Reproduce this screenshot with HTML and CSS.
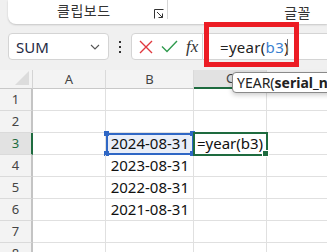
FILE: index.html
```html
<!DOCTYPE html>
<html lang="ko">
<head>
    <meta charset="UTF-8">
    <title>YEAR</title>
    <link rel="stylesheet" href="styles.css">
</head>
<body>
    <div class="ribbon">
        <div class="group clip">
            <span class="group-label">클립보드</span>
            <span class="launcher">
                <svg width="10" height="10" viewBox="0 0 10 10"><path d="M0.5 9.5V0.5h9M3 3l5.5 5.5M4.5 8.5h4v-4" fill="none" stroke="#333" stroke-width="1"/></svg>
            </span>
        </div>
        <div class="group font">
            <span class="group-label">글꼴</span>
        </div>
    </div>

    <div class="formula-row">
        <div class="namebox">
            <span>SUM</span>
            <svg width="10" height="6" viewBox="0 0 10 6"><path d="M1 1l4 4 4-4" fill="none" stroke="#555" stroke-width="1.1"/></svg>
        </div>
        <div class="dots"><i></i><i></i><i></i></div>
        <div class="fbuttons">
            <svg width="14" height="14" viewBox="0 0 14 14"><path d="M1 1l12 12M13 1L1 13" stroke="#e0383e" stroke-width="1.4"/></svg>
            <svg width="17" height="13" viewBox="0 0 17 13"><path d="M1 6.5l5 5L16 1" fill="none" stroke="#2f9a4e" stroke-width="1.4"/></svg>
            <span class="fx">fx</span>
        </div>
        <div class="finput">=year(<span class="ref">b3</span>)<span class="caret"></span></div>
        <div class="highlight"></div>
    </div>

    <div class="sheet">
        <div class="colheads">
            <div class="corner"></div>
            <div class="ch">A</div>
            <div class="ch">B</div>
            <div class="ch active">C</div>
            <div class="ch last"></div>
        </div>
        <div class="row"><div class="rh">1</div><div class="c"></div><div class="c b"></div><div class="c"></div><div class="c last"></div></div>
        <div class="row"><div class="rh">2</div><div class="c"></div><div class="c b"></div><div class="c"></div><div class="c last"></div></div>
        <div class="row sel"><div class="rh active">3</div><div class="c"></div><div class="c b src">2024-08-31<i class="h tl"></i><i class="h tr"></i><i class="h bl"></i><i class="h br"></i></div><div class="c edit">=year(b3)<i class="fill"></i></div><div class="c last"></div></div>
        <div class="row"><div class="rh">4</div><div class="c"></div><div class="c b">2023-08-31</div><div class="c"></div><div class="c last"></div></div>
        <div class="row"><div class="rh">5</div><div class="c"></div><div class="c b">2022-08-31</div><div class="c"></div><div class="c last"></div></div>
        <div class="row"><div class="rh">6</div><div class="c"></div><div class="c b">2021-08-31</div><div class="c"></div><div class="c last"></div></div>
        <div class="row"><div class="rh">7</div><div class="c"></div><div class="c b"></div><div class="c"></div><div class="c last"></div></div>
        <div class="row"><div class="rh">8</div><div class="c"></div><div class="c b"></div><div class="c"></div><div class="c last"></div></div>
        <div class="tip">YEAR(<b>serial_number</b>)</div>
    </div>
</body>
</html>
```

FILE: styles.css
```css
body {
    margin: 0;
    width: 327px;
    height: 252px;
    overflow: hidden;
    background: #f0f0f0;
    font-family: "Noto Sans", "Noto Sans CJK KR", sans-serif;
    color: #222;
}
.ribbon {
    height: 24px;
    margin-left: 8px;
    background: #fff;
    border-bottom-left-radius: 8px;
    box-shadow: 0 1px 2px rgba(0,0,0,0.18);
    display: flex;
}
.group {
    display: flex;
    align-items: center;
    height: 24px;
    position: relative;
}
.clip {
    width: 159px;
    border-right: 1px solid #d6d6d6;
    height: 19px;
}
.group-label {
    font-family: "Noto Sans CJK KR", sans-serif;
    font-size: 14px;
    color: #333;
    line-height: 24px;
    letter-spacing: 0.5px;
}
.clip .group-label {
    margin-left: 49px;
}
.launcher {
    margin-left: auto;
    margin-right: 3px;
    margin-top: 8px;
    display: flex;
}
.font {
    margin-left: auto;
    margin-right: 16px;
}
.formula-row {
    display: flex;
    align-items: center;
    height: 27px;
    margin-top: 9px;
    padding-left: 8px;
    position: relative;
}
.namebox {
    width: 101px;
    height: 27px;
    box-sizing: border-box;
    background: #fff;
    border: 1px solid #d4d4d4;
    border-radius: 4px;
    display: flex;
    align-items: center;
    justify-content: space-between;
    padding: 0 8px 0 7px;
    font-size: 15px;
    color: #1f2a44;
}
.dots {
    width: 22px;
    display: flex;
    flex-direction: column;
    align-items: center;
    gap: 3px;
}
.dots i {
    width: 2px;
    height: 2px;
    background: #333;
}
.fbuttons {
    width: 72px;
    height: 27px;
    box-sizing: border-box;
    background: #fff;
    border: 1px solid #d4d4d4;
    border-radius: 4px 0 0 4px;
    display: flex;
    align-items: center;
    gap: 8px;
    padding-left: 7px;
}
.fx {
    font-family: "Liberation Serif", serif;
    font-style: italic;
    font-size: 17px;
    color: #333;
}
.finput {
    flex: 1;
    height: 27px;
    box-sizing: border-box;
    background: #fff;
    border: 1px solid #d4d4d4;
    border-left: none;
    border-right: none;
    display: flex;
    align-items: center;
    padding-left: 17px;
    font-size: 15px;
    letter-spacing: 0.3px;
    color: #222;
}
.ref {
    color: #3b7fd0;
}
.caret {
    width: 1px;
    height: 16px;
    background: #777;
    margin-left: -2px;
}
.highlight {
    position: absolute;
    left: 204px;
    top: -11px;
    width: 95px;
    height: 45px;
    box-sizing: border-box;
    border: 5px solid #ec1c24;
}
.sheet {
    margin-top: 10px;
    background: #fff;
    position: relative;
}
.colheads, .row {
    display: grid;
    grid-template-columns: 33px 73px 88px 73px 1fr;
}
.colheads {
    height: 19px;
    background: #f3f3f3;
}
.corner {
    border-right: 1px solid #d4d4d4;
    border-bottom: 1px solid #c8c8c8;
    position: relative;
}
.corner::after {
    content: "";
    position: absolute;
    right: 3px;
    bottom: 3px;
    border-left: 14px solid transparent;
    border-bottom: 14px solid #dcdcdc;
}
.ch {
    font-size: 13px;
    color: #444;
    text-align: center;
    line-height: 18px;
    border-right: 1px solid #dadada;
    border-bottom: 1px solid #c8c8c8;
}
.ch.active {
    background: #e2e2e2;
    border-bottom: 2px solid #1e6b3f;
    line-height: 17px;
}
.ch.last, .c.last {
    border-right: none;
}
.row {
    height: 22px;
}
.rh {
    background: #f3f3f3;
    font-size: 13px;
    color: #444;
    text-align: center;
    line-height: 21px;
    border-right: 2px solid #c4c4c4;
    border-bottom: 1px solid #dadada;
}
.rh.active {
    background: #e2e2e2;
    color: #1e6b3f;
    border-right-color: #1e6b3f;
}
.c {
    border-right: 1px solid #e0e0e0;
    border-bottom: 1px solid #e0e0e0;
    font-size: 15px;
    line-height: 21px;
    color: #111;
    position: relative;
    white-space: nowrap;
}
.c.b {
    text-align: right;
    padding-right: 4px;
}
.src {
    background: #e9eef8;
    outline: 2px solid #2f67c5;
    outline-offset: -2px;
}
.h {
    position: absolute;
    width: 5px;
    height: 5px;
    background: #2f67c5;
}
.tl { left: -2px; top: -2px; }
.tr { right: -2px; top: -2px; }
.bl { left: -2px; bottom: -2px; }
.br { right: -2px; bottom: -2px; }
.edit {
    outline: 2px solid #1e6b3f;
    outline-offset: -1px;
    padding-left: 3px;
    z-index: 1;
}
.fill {
    position: absolute;
    right: -3px;
    bottom: -3px;
    width: 5px;
    height: 5px;
    background: #1e6b3f;
    border: 1px solid #fff;
}
.tip {
    position: absolute;
    left: 232px;
    top: 2px;
    height: 21px;
    padding: 0 4px;
    box-sizing: border-box;
    background: #fff;
    border: 1px solid #8a8a8a;
    border-radius: 4px;
    box-shadow: 0 2px 5px rgba(0,0,0,0.2);
    font-size: 14px;
    line-height: 19px;
    color: #222;
    white-space: nowrap;
    z-index: 2;
}
```
